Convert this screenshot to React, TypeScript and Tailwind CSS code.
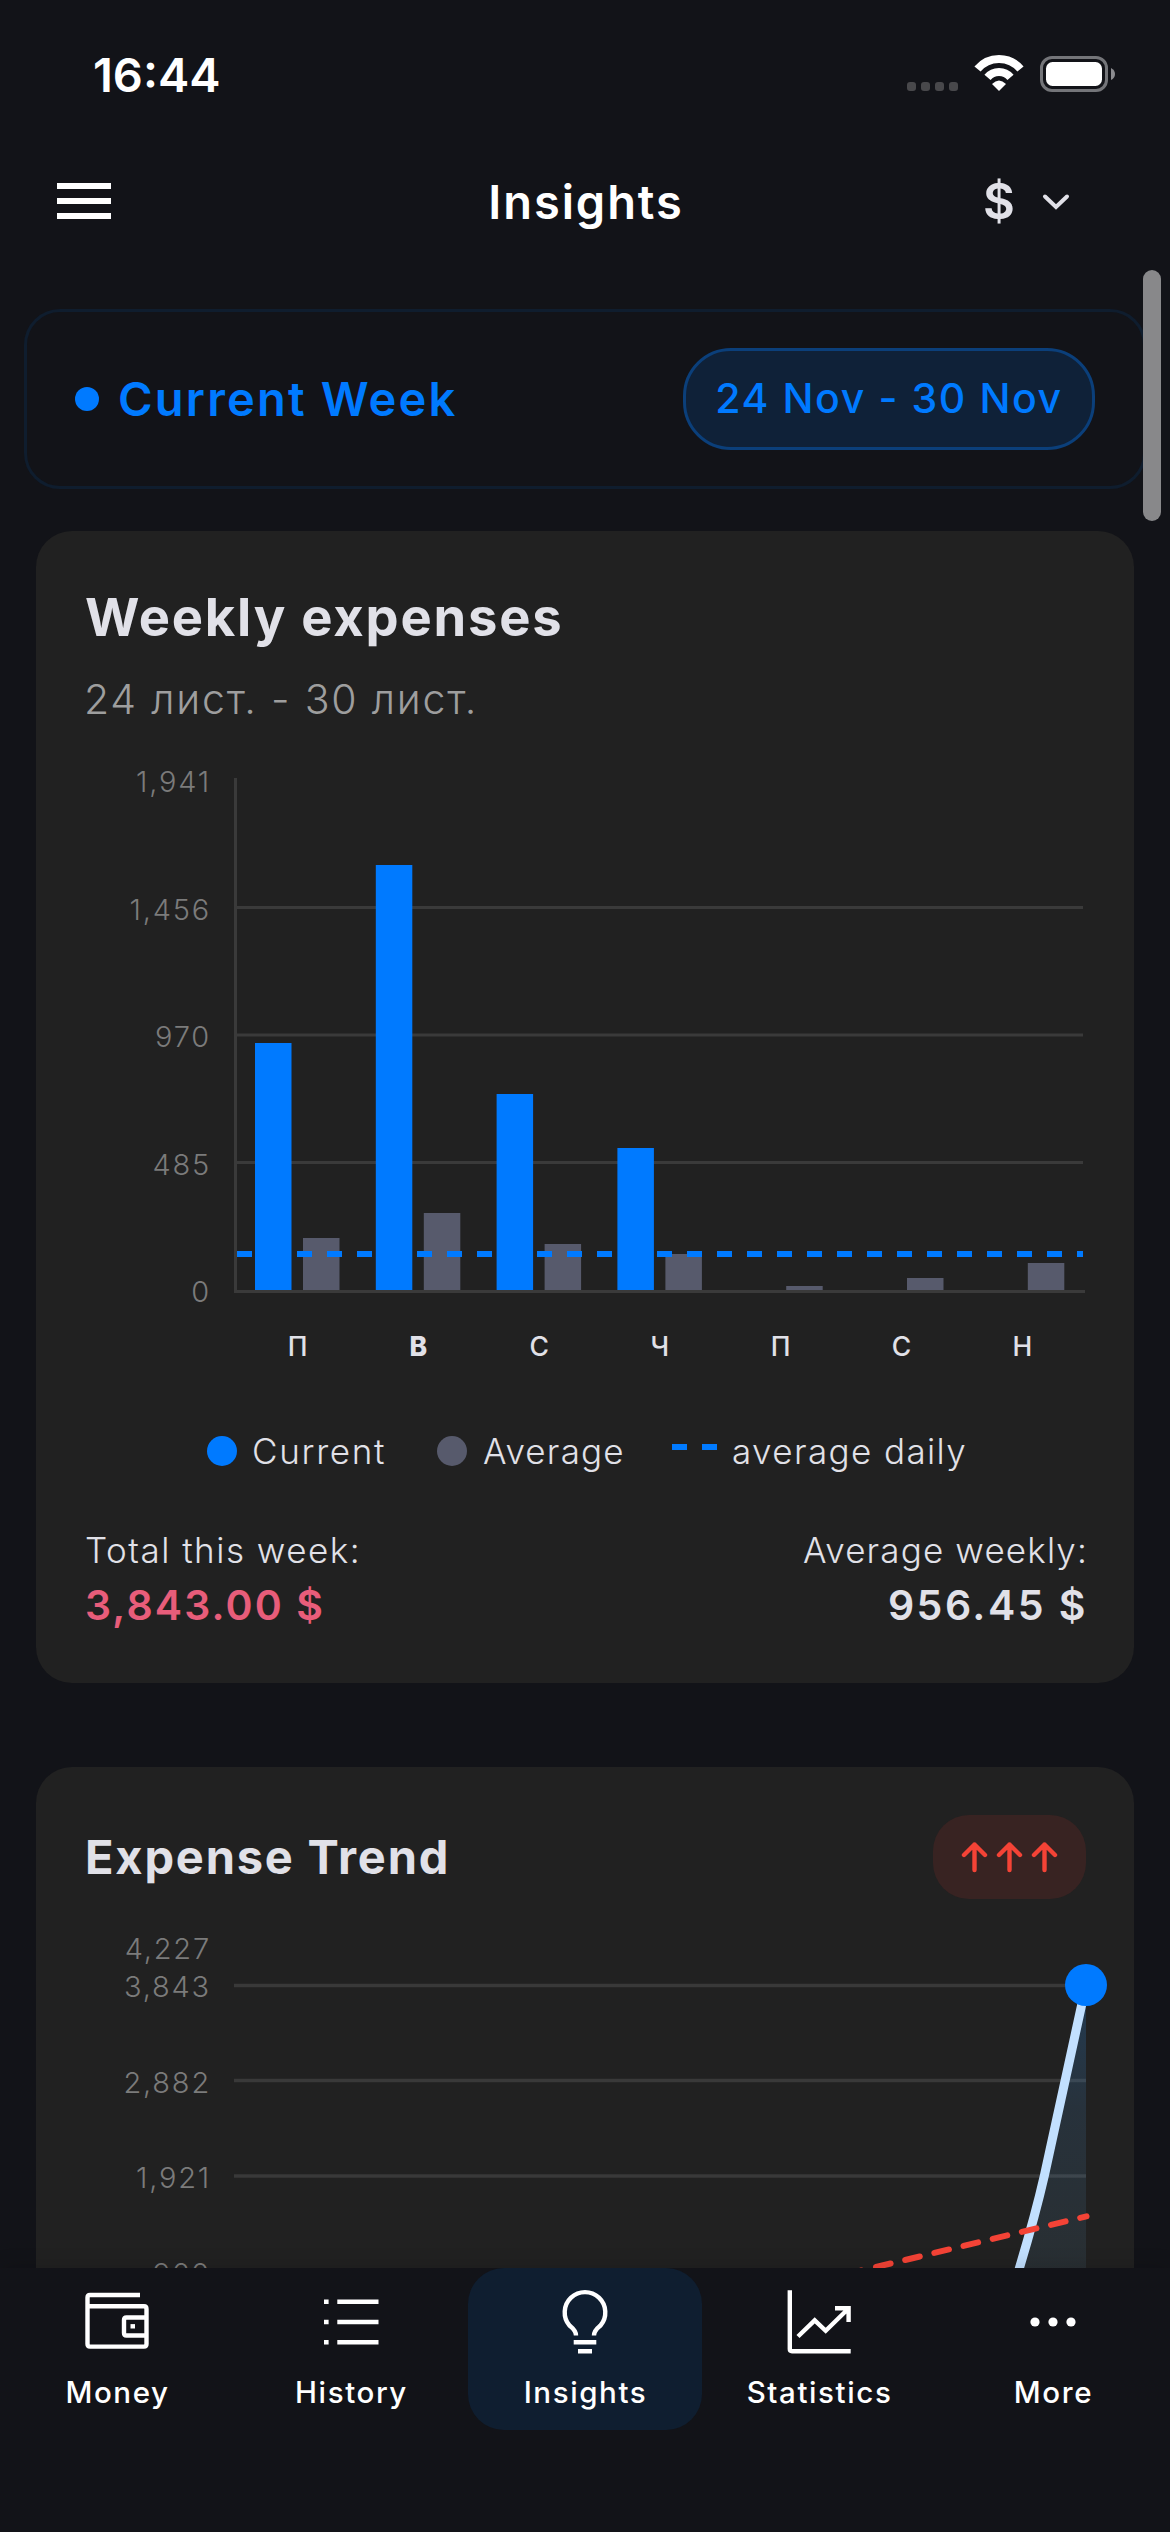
import type { ReactNode } from "react";

const days = [
  { label: "П", current: 247, average: 52 },
  { label: "В", current: 425, average: 77, today: true },
  { label: "С", current: 196, average: 46 },
  { label: "Ч", current: 142, average: 36 },
  { label: "П", current: 0, average: 4 },
  { label: "С", current: 0, average: 12 },
  { label: "Н", current: 0, average: 27 },
];

const weeklyTicks = [
  { label: "1,941", y: 781.5 },
  { label: "1,456", y: 909 },
  { label: "970", y: 1036.5 },
  { label: "485", y: 1164.5 },
  { label: "0", y: 1291.5 },
];

const trendTicks = [
  { label: "4,227", y: 1948.5 },
  { label: "3,843", y: 1986.5 },
  { label: "2,882", y: 2082.5 },
  { label: "1,921", y: 2177.5 },
  { label: "960", y: 2273 },
];

function StatusBar() {
  return (
    <div className="flex h-[148px] shrink-0 items-center justify-between pl-[93px] pr-[54px]">
      <span className="text-[47px] font-semibold leading-none">16:44</span>
      <svg width="212" height="40" viewBox="904 54 212 40" fill="none">
        {[907, 921, 935, 949].map((x) => (
          <rect key={x} x={x} y="82" width="9" height="9" rx="3" fill="#48484b" />
        ))}
        <path d="M977.5 69A28 28 0 0 1 1020.5 69" stroke="#fff" strokeWidth="8" />
        <path d="M987.5 77.4A15 15 0 0 1 1010.5 77.4" stroke="#fff" strokeWidth="8" />
        <path d="M999 91l-7-7q7-7 14 0z" fill="#fff" />
        <rect x="1041.5" y="57.5" width="65" height="33" rx="10.5" stroke="#747579" strokeWidth="3" />
        <rect x="1046" y="62" width="56" height="24" rx="6.5" fill="#fff" />
        <path d="M1111 68q4 2 4 6t-4 6z" fill="#8b8b8f" />
      </svg>
    </div>
  );
}

function Header() {
  return (
    <header className="grid h-[106px] shrink-0 grid-cols-3 items-center pl-[57px] pr-[100px]">
      <div className="flex w-[54px] flex-col gap-[9px]">
        <span className="h-1.5 bg-white" />
        <span className="h-1.5 bg-white" />
        <span className="h-1.5 bg-white" />
      </div>
      <h1 className="pl-[45px] text-center text-[47px] font-semibold leading-none tracking-[1.9px]">Insights</h1>
      <div className="flex items-center justify-end gap-[27px] text-[#e1e1e8]">
        <span className="text-[49px] font-semibold leading-none">$</span>
        <svg width="28" height="20" viewBox="0 0 28 20" fill="none" className="mt-[2px]">
          <path d="M3 4.500l11 10.500l11-10.500" stroke="currentColor" strokeWidth="4" strokeLinecap="round" />
        </svg>
      </div>
    </header>
  );
}

function CurrentWeek() {
  return (
    <div className="ml-[24px] mt-[55px] flex h-[180px] w-[1122px] items-center justify-between rounded-[36px] border-[3px] border-[#0f1d2e] px-[48px] text-[#007aff]">
      <div className="flex items-center gap-[19px]">
        <span className="size-6 rounded-full bg-[#007aff]" />
        <span className="mb-[2px] text-[47px] font-semibold leading-none tracking-[2.2px]">Current Week</span>
      </div>
      <div className="flex h-[102px] w-[412px] items-center justify-center rounded-[48px] border-[3px] border-[#0b3f7a] bg-[#0f2138] text-[41px] font-medium tracking-[1.6px]">
        24 Nov - 30 Nov
      </div>
    </div>
  );
}

function AxisLabels({ ticks }: { ticks: { label: string; y: number }[] }) {
  return (
    <g fill="#7b7b7b" fontSize="29" fontWeight="300" textAnchor="end" letterSpacing="1.8">
      {ticks.map((t) => (
        <text key={t.label} x="211" y={t.y + 10.5}>{t.label}</text>
      ))}
    </g>
  );
}

function WeeklyChart() {
  return (
    <svg width="1098" height="640" viewBox="36 750 1098 640" className="mt-[25px] block">
      <AxisLabels ticks={weeklyTicks} />
      <path d="M236 907.500H1083M236 1035H1083M236 1162.500H1083M235.500 778V1291.500H1085" stroke="#3a3a3a" strokeWidth="3" fill="none" />
      {days.map((d, i) => (
        <g key={i}>
          <rect x={255 + i * 120.8} y={1290 - d.current} width="36.500" height={d.current} fill="#007aff" />
          <rect x={303 + i * 120.8} y={1290 - d.average} width="36.500" height={d.average} fill="#575a6c" />
          <text
            x={297.5 + i * 120.8}
            y="1356"
            fill="#e1e1e8"
            fontSize="26.500"
            fontWeight={d.today ? 800 : 450}
            textAnchor="middle"
          >
            {d.label}
          </text>
        </g>
      ))}
      <path d="M237 1254H1083" stroke="#007aff" strokeWidth="6" strokeDasharray="15 15" />
    </svg>
  );
}

function Legend() {
  return (
    <div className="mt-[38px] flex h-[46px] items-center pl-[171px] text-[35px] font-[350] leading-none text-[#e1e1e8]">
      <span className="mr-[15px] size-[30px] rounded-full bg-[#007aff]" />
      <span className="w-[185px] tracking-[1.7px]">Current</span>
      <span className="mr-[16px] size-[30px] rounded-full bg-[#575a6c]" />
      <span className="w-[189px] tracking-[1.2px]">Average</span>
      <span className="mb-[8px] mr-[15px] flex gap-[15px]">
        <span className="h-[6px] w-[15px] bg-[#007aff]" />
        <span className="h-[6px] w-[15px] bg-[#007aff]" />
      </span>
      <span className="tracking-[1.4px]">average daily</span>
    </div>
  );
}

function WeeklyExpenses() {
  return (
    <section className="mx-9 mt-[42px] h-[1152px] rounded-[36px] bg-[#212121] pt-[54px]">
      <h2 className="pl-[49px] text-[52.5px] font-bold leading-[64px] tracking-[1.8px] text-[#e1e1e8]">Weekly expenses</h2>
      <p className="mt-[24px] pl-[48px] text-[41px] font-[350] leading-[52px] tracking-[1.8px] text-[#9e9e9e]">24 лист. - 30 лист.</p>
      <WeeklyChart />
      <Legend />
      <div className="mt-[54px] flex justify-between px-[48px] text-[#e1e1e8]">
        <div>
          <p className="pl-px text-[35px] font-[350] leading-[44px] tracking-[1.5px]">Total this week:</p>
          <p className="mt-[7px] pl-[1px] text-[41px] font-semibold leading-[52px] tracking-[2.1px] text-[#e85d7a]">3,843.00 $</p>
        </div>
        <div className="-mr-[2px] text-right">
          <p className="text-[35px] font-[350] leading-[44px] tracking-[1.15px]">Average weekly:</p>
          <p className="mt-[7px] text-[41px] font-semibold leading-[52px] tracking-[2.5px]">956.45 $</p>
        </div>
      </div>
    </section>
  );
}

function TrendChart() {
  return (
    <svg width="1098" height="400" viewBox="36 1915 1098 400" className="mt-4 block" fill="none">
      <defs>
        <linearGradient id="area" x1="0" y1="1985" x2="0" y2="2300" gradientUnits="userSpaceOnUse">
          <stop offset="0" stopColor="#1f7ad0" stopOpacity="0.28" />
          <stop offset="0.4" stopColor="#4a90d0" stopOpacity="0.15" />
          <stop offset="1" stopColor="#6aa0c0" stopOpacity="0.1" />
        </linearGradient>
      </defs>
      <AxisLabels ticks={trendTicks} />
      <path d="M234 1985.500H1086M234 2080.500H1086M234 2176H1086" stroke="#393939" strokeWidth="3.500" />
      <path d="M1086 1985L1044.500 2175C1036 2212 1028 2240 1017 2276L1006 2315H1086Z" fill="url(#area)" />
      <path d="M1086 1985L1044.500 2175C1036 2212 1028 2240 1017 2276L1006 2315" stroke="#c2e0ff" strokeWidth="9" />
      <circle cx="1086" cy="1985" r="21" fill="#007aff" />
      <path
        d="M1086.500 2216.300L820 2280.500"
        stroke="#f44336"
        strokeWidth="6"
        strokeLinecap="round"
        strokeDasharray="15 15"
        strokeDashoffset="8.500"
      />
    </svg>
  );
}

function ExpenseTrend() {
  return (
    <section className="mx-9 mt-[84px] h-[900px] rounded-t-[36px] bg-[#212121] pt-[48px]">
      <div className="flex h-[84px] items-center justify-between px-[48px]">
        <h2 className="mb-px pl-px text-[47px] font-[650] leading-none tracking-[1.8px] text-[#e1e1e8]">Expense Trend</h2>
        <div className="flex h-[84px] w-[153px] items-center justify-center gap-[8px] rounded-[36px] bg-[#382322]">
          {[0, 1, 2].map((i) => (
            <svg key={i} width="27" height="32" viewBox="0 0 27 32" fill="none">
              <path d="M13.500 29V3.500M3 14L13.500 3.500L24 14" stroke="#f44336" strokeWidth="4.400" strokeLinecap="round" strokeLinejoin="round" />
            </svg>
          ))}
        </div>
      </div>
      <TrendChart />
    </section>
  );
}

function Tab({ label, active, children }: { label: string; active?: boolean; children: ReactNode }) {
  return (
    <div className={`flex h-[162px] w-[234px] flex-col items-center rounded-[36px] pt-[18px] ${active ? "bg-[#0f1e30]" : ""}`}>
      {children}
      <span className="mt-[16px] pl-px text-[29.5px] font-[450] leading-[36px] tracking-[1.6px]">{label}</span>
    </div>
  );
}

const iconProps = { width: 72, height: 72, fill: "none", stroke: "currentColor", strokeWidth: 4.4 };

function TabBar() {
  return (
    <nav className="relative flex h-[264px] shrink-0 bg-[#121318] shadow-[0_-3px_18px_rgba(0,0,0,0.12)]">
      <Tab label="Money">
        <svg {...iconProps} viewBox="81 2286 72 72">
          <path d="M140 2295H90q-2.500 0-2.500 2.500V2344q0 2.600 2.500 2.600H144q2.500 0 2.500-2.600V2309q0-2.700-2.500-2.700H87.500" />
          <path d="M146.500 2317.500H126.500q-2.500 0-2.500 2.500V2333q0 2.500 2.500 2.500H146.500" />
          <path d="M130.500 2326.300h4.500" />
        </svg>
      </Tab>
      <Tab label="History">
        <svg {...iconProps} viewBox="315 2286 72 72">
          <path d="M324 2301.700h4.600M337.300 2301.700h41.200M324 2322h4.600M337.300 2322h41.200M324 2342.300h4.600M337.300 2342.300h41.200" />
        </svg>
      </Tab>
      <Tab label="Insights" active>
        <svg {...iconProps} viewBox="549 2286 72 72">
          <path d="M576 2335.500C576 2330 572.500 2328 569.500 2325.500A20.300 20.300 0 1 1 600.500 2325.500C597.500 2328 594 2330 594 2335.500" />
          <path d="M573.700 2342.300h22.600M578 2351.200h14" />
        </svg>
      </Tab>
      <Tab label="Statistics">
        <svg {...iconProps} viewBox="783 2286 72 72">
          <path d="M789.800 2290.300V2349q0 2.200 2.200 2.200H850.700" />
          <path d="M798 2336.500L814.700 2320.300L825.700 2330.800L848 2309M835 2308.300H848.600V2322" />
        </svg>
      </Tab>
      <Tab label="More">
        <svg width="72" height="72" viewBox="1017 2286 72 72" fill="currentColor">
          <circle cx="1035" cy="2322" r="4.600" />
          <circle cx="1053" cy="2322" r="4.600" />
          <circle cx="1071" cy="2322" r="4.600" />
        </svg>
      </Tab>
    </nav>
  );
}

export default function App() {
  return (
    <div className="flex h-[2532px] w-[1170px] flex-col overflow-hidden bg-[#121318] font-['Inter',sans-serif] text-white">
      <StatusBar />
      <Header />
      <main className="relative min-h-0 flex-1 overflow-hidden">
        <CurrentWeek />
        <WeeklyExpenses />
        <ExpenseTrend />
        {/* Scroll indicator */}
        <div className="absolute right-[9px] top-[16px] h-[251px] w-[18px] rounded-full bg-[#88888a]" />
      </main>
      <TabBar />
    </div>
  );
}
